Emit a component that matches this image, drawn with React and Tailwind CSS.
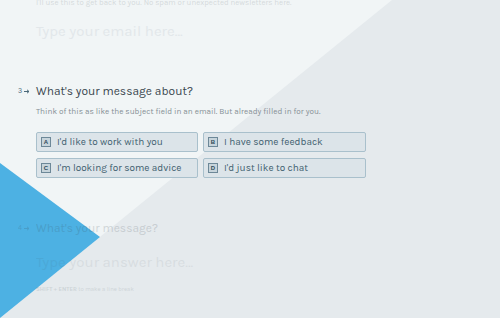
const choices = [
  { key: "A", label: "I'd like to work with you" },
  { key: "B", label: "I have some feedback" },
  { key: "C", label: "I'm looking for some advice" },
  { key: "D", label: "I'd just like to chat" },
];

const Choice = ({ k, label }) => (
  <div className="flex items-center h-[20px] rounded-[2px] border border-[#a9c0cc] bg-[#dce4e9] px-[4px] gap-[6px]">
    <span className="flex items-center justify-center w-[10px] h-[10px] border border-[#6d8898] bg-[#c7d4db] text-[6px] font-bold leading-none text-[#2f4a59] font-['Liberation_Sans',sans-serif]">
      {k}
    </span>
    <span className="text-[10px] leading-none text-[#41606f]">{label}</span>
  </div>
);

const Arrow = () => (
  <svg width="6" height="5" viewBox="0 0 6 5">
    <path d="M0 2.5h5M3 0.8l2 1.7-2 1.7" fill="none" stroke="currentColor" strokeWidth="1" />
  </svg>
);

export default function App() {
  return (
    <div className="relative w-[500px] h-[318px] overflow-hidden bg-[#e5eaed] font-['Karla','Open_Sans',sans-serif]">
      <svg className="absolute inset-0" width="500" height="318" viewBox="0 0 500 318">
        <polygon points="0,0 392,0 0,318" fill="#f1f5f6" />
        <polygon points="0,163 100,237 0,318" fill="#4db1e3" />
      </svg>

      <div className="relative pl-[36px] flex flex-col">
        {/* previous question, faded */}
        <div className="text-[#3c4a52]">
          <p className="mt-[-2px] text-[7.9px] leading-[10px] opacity-[0.16]">
            I'll use this to get back to you. No spam or unexpected newsletters here.
          </p>
          <p className="mt-[13px] text-[15px] leading-[20px] text-[#e2e7ea]">Type your email here...</p>
        </div>

        {/* current question */}
        <div className="mt-[42px] relative">
          <div className="absolute left-[-18px] top-[4px] flex items-center gap-[2px] text-[7px] leading-[8px] text-[#4a6878]">
            <span>3</span>
            <Arrow />
          </div>
          <h2 className="text-[12px] leading-[16px] text-[#3b4850]">What's your message about?</h2>
          <p className="mt-[7px] text-[8.2px] leading-[10px] text-[#858f95]">
            Think of this as like the subject field in an email. But already filled in for you.
          </p>
          <div className="mt-[16px] grid grid-cols-[162px_163px] gap-x-[5px] gap-y-[6px]">
            {choices.map((c) => (
              <Choice key={c.key} k={c.key} label={c.label} />
            ))}
          </div>
        </div>

        {/* next question, faded */}
        <div className="mt-[42px] relative text-[#3b4850]">
          <div className="absolute left-[-18px] top-[4px] flex items-center gap-[2px] text-[7px] leading-[8px] opacity-[0.18]">
            <span>4</span>
            <Arrow />
          </div>
          <h2 className="text-[12px] leading-[16px] opacity-[0.18]">What's your message?</h2>
          <p className="mt-[16px] text-[15px] leading-[20px] text-[#3b4850] opacity-[0.08]">Type your answer here...</p>
          <p className="mt-[13px] text-[6px] leading-[8px] text-[#6d7b82] opacity-[0.2]">
            <span className="font-bold">SHIFT</span> + <span className="font-bold">ENTER</span> to make a line break
          </p>
        </div>
      </div>
    </div>
  );
}
